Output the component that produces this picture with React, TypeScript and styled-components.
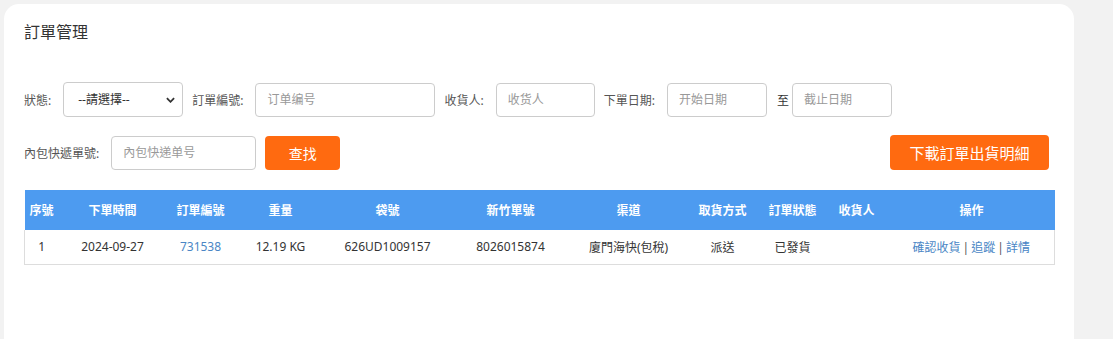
import styled, { createGlobalStyle } from "styled-components";

const GlobalStyle = createGlobalStyle`
  html, body {
    margin: 0;
    padding: 0;
    background: #f2f2f2;
  }
  body {
    font-family: "Noto Sans", "Noto Sans CJK TC", sans-serif;
    color: #333;
  }
  * {
    box-sizing: border-box;
  }
`;

type Column = { title: string; width: number };

const columns: Column[] = [
  { title: "序號", width: 34 },
  { title: "下單時間", width: 108 },
  { title: "訂單編號", width: 68 },
  { title: "重量", width: 92 },
  { title: "袋號", width: 122 },
  { title: "新竹單號", width: 124 },
  { title: "渠道", width: 112 },
  { title: "取貨方式", width: 76 },
  { title: "訂單狀態", width: 64 },
  { title: "收貨人", width: 64 },
  { title: "操作", width: 166 },
];

const orders = [
  {
    id: 1,
    date: "2024-09-27",
    orderNo: "731538",
    weight: "12.19 KG",
    bag: "626UD1009157",
    hsinchu: "8026015874",
    channel: "廈門海快(包稅)",
    pickup: "派送",
    status: "已發貨",
    receiver: "",
  },
];

export default function App() {
  return (
    <>
      <GlobalStyle />
      <Page>
        <Card>
          <Title>訂單管理</Title>

          <FilterRow>
            <Field>
              <Label>狀態:</Label>
              <SelectWrap>
                <Select defaultValue="">
                  <option value="">--請選擇--</option>
                </Select>
                <Chevron viewBox="0 0 10 6" aria-hidden>
                  <path d="M1 1l4 4 4-4" />
                </Chevron>
              </SelectWrap>
            </Field>
            <Field>
              <Label>訂單編號:</Label>
              <Input $width={180} placeholder="订单编号" />
            </Field>
            <Field>
              <Label>收貨人:</Label>
              <Input $width={99} placeholder="收货人" />
            </Field>
            <Field>
              <Label>下單日期:</Label>
              <Input $width={100} placeholder="开始日期" />
              <Label $plain>至</Label>
              <Input $width={100} placeholder="截止日期" />
            </Field>
          </FilterRow>

          <FilterRow $spread>
            <Field>
              <Label>內包快遞單號:</Label>
              <Input $width={145} placeholder="內包快递单号" />
              <SearchButton type="button">查找</SearchButton>
            </Field>
            <DownloadButton type="button">下載訂單出貨明細</DownloadButton>
          </FilterRow>

          <Table>
            <colgroup>
              {columns.map((c) => (
                <col key={c.title} style={{ width: c.width }} />
              ))}
            </colgroup>
            <thead>
              <tr>
                {columns.map((c) => (
                  <Th key={c.title}>{c.title}</Th>
                ))}
              </tr>
            </thead>
            <tbody>
              {orders.map((o) => (
                <tr key={o.id}>
                  <Td>{o.id}</Td>
                  <Td>{o.date}</Td>
                  <Td>
                    <LinkText>{o.orderNo}</LinkText>
                  </Td>
                  <Td>{o.weight}</Td>
                  <Td>{o.bag}</Td>
                  <Td>{o.hsinchu}</Td>
                  <Td>{o.channel}</Td>
                  <Td>{o.pickup}</Td>
                  <Td>{o.status}</Td>
                  <Td>{o.receiver}</Td>
                  <Td>
                    <LinkText>確認收貨</LinkText>
                    <Sep>|</Sep>
                    <LinkText>追蹤</LinkText>
                    <Sep>|</Sep>
                    <LinkText>詳情</LinkText>
                  </Td>
                </tr>
              ))}
            </tbody>
          </Table>
        </Card>
      </Page>
    </>
  );
}

/** styles */

const Page = styled.div`
  width: 1113px;
  height: 339px;
  padding: 4px 39px 0 4px;
  overflow: hidden;
`;

const Card = styled.div`
  background: #fff;
  border-radius: 15px 15px 0 0;
  min-height: 360px;
  padding: 18px 20px 0 20px;
`;

const Title = styled.h1`
  margin: 0;
  font-size: 16px;
  font-weight: 400;
  line-height: 20px;
  color: #333;
  margin-bottom: 40px;
`;

const FilterRow = styled.div<{ $spread?: boolean }>`
  display: flex;
  align-items: center;
  gap: 9px;
  justify-content: ${(p) => (p.$spread ? "space-between" : "flex-start")};
  margin-bottom: 18px;
  padding-right: ${(p) => (p.$spread ? "5px" : "0")};
`;

const Field = styled.div`
  display: flex;
  align-items: center;
  gap: 10px;
`;

const Label = styled.span<{ $plain?: boolean }>`
  font-size: 12px;
  color: ${(p) => (p.$plain ? "#333" : "#555")};
  white-space: nowrap;
  padding-right: ${(p) => (p.$plain ? "0" : "2px")};
  margin-right: ${(p) => (p.$plain ? "-7px" : "0")};
`;

const SelectWrap = styled.div`
  position: relative;
  width: 120px;
  height: 35px;
`;

const Select = styled.select`
  appearance: none;
  width: 100%;
  height: 100%;
  border: 1px solid #ccc;
  border-radius: 4px;
  background: #fff;
  padding: 0 24px 0 14px;
  font-family: inherit;
  font-size: 12px;
  color: #333;
  outline: none;
`;

const Chevron = styled.svg`
  position: absolute;
  right: 8px;
  top: 15px;
  width: 9px;
  height: 6px;
  fill: none;
  stroke: #333;
  stroke-width: 2;
  pointer-events: none;
`;

const Input = styled.input<{ $width: number }>`
  width: ${(p) => p.$width}px;
  height: 34px;
  border: 1px solid #ccc;
  border-radius: 4px;
  padding: 0 11px;
  font-family: inherit;
  font-size: 12px;
  color: #333;
  outline: none;

  &::placeholder {
    color: #999;
  }
`;

const OrangeButton = styled.button`
  height: 34px;
  border: none;
  border-radius: 4px;
  background: #ff6a10;
  color: #fff;
  font-family: inherit;
  cursor: pointer;
`;

const SearchButton = styled(OrangeButton)`
  width: 75px;
  font-size: 14px;
  margin-left: -1px;
`;

const DownloadButton = styled(OrangeButton)`
  width: 159px;
  height: 35px;
  font-size: 15px;
`;

const Table = styled.table`
  width: 1030px;
  border-collapse: collapse;
  table-layout: fixed;
  margin-top: 20px;
  font-size: 12px;
`;

const Th = styled.th`
  height: 40px;
  background: #4d9bf0;
  color: #fff;
  font-weight: 700;
  font-size: 12px;
  text-align: center;
  padding: 0;
  white-space: nowrap;
`;

const Td = styled.td`
  height: 34px;
  text-align: center;
  color: #333;
  padding: 0;
  border-top: none;
  border-bottom: 1px solid #ddd;
  white-space: nowrap;

  &:first-child {
    border-left: 1px solid #ddd;
  }
  &:last-child {
    border-right: 1px solid #ddd;
  }
`;

const LinkText = styled.span`
  color: #4a86c5;
  cursor: pointer;
`;

const Sep = styled.span`
  color: #555;
  margin: 0 2px;
`;
